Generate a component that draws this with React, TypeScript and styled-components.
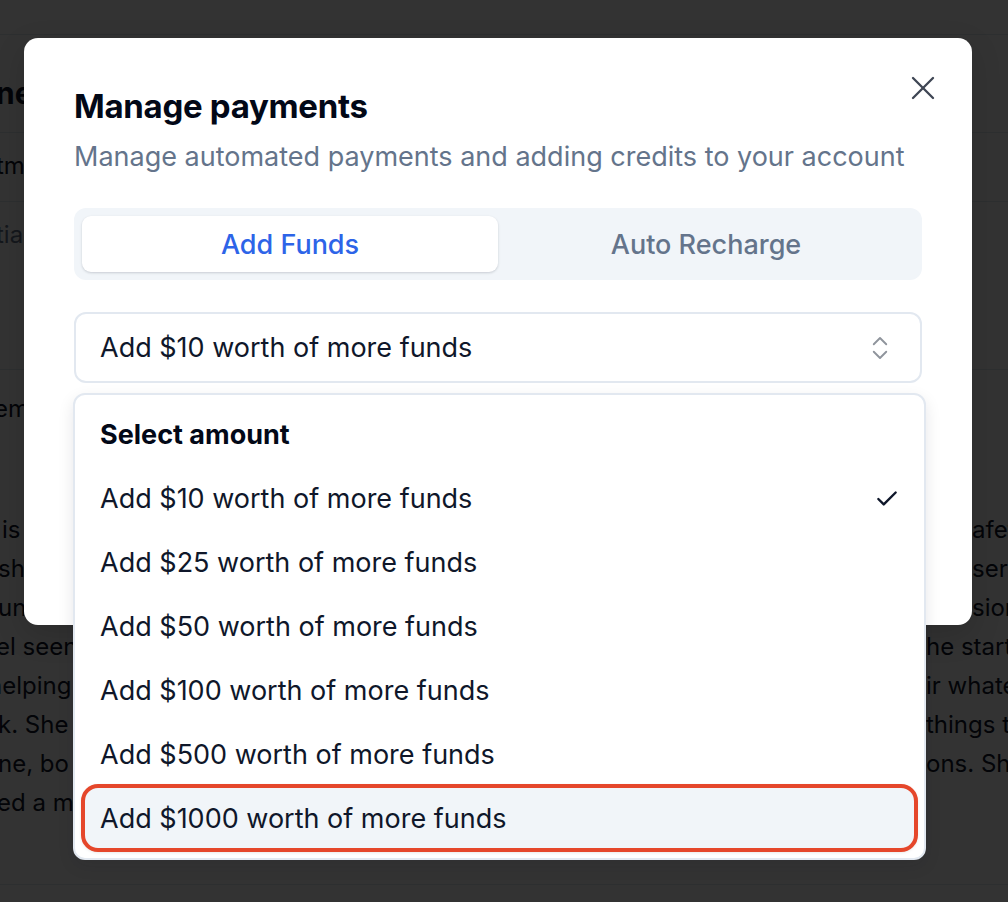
import React from "react";
import styled, { createGlobalStyle } from "styled-components";

const GlobalStyle = createGlobalStyle`
  html, body {
    margin: 0;
    padding: 0;
    width: 1008px;
    height: 902px;
    overflow: hidden;
    background: #ffffff;
    font-family: Inter, "Noto Sans", "Liberation Sans", sans-serif;
    color: #0f172a;
  }
  * { box-sizing: border-box; }
`;

/* ---------- background page ---------- */
const Page = styled.div`
  position: relative;
  width: 1008px;
  height: 902px;
  overflow: hidden;
  display: flex;
  flex-direction: column;
  background: #ffffff;
`;

const TopBar = styled.div`
  height: 35px;
  border-bottom: 1px solid #e2e8f0;
`;

const Section = styled.div<{ $h: number; $muted?: boolean; $bold?: boolean; $size?: number }>`
  height: ${(p) => p.$h}px;
  border-bottom: 1px solid #e2e8f0;
  padding-top: ${(p) => (p.$bold ? 42 : 17)}px;
  font-size: ${(p) => p.$size ?? 24}px;
  font-weight: ${(p) => (p.$bold ? 700 : 400)};
  color: ${(p) => (p.$muted ? "#64748b" : "#0f172a")};
  line-height: 32px;
  white-space: nowrap;
  margin-left: -4px;
`;

const Intro = styled.div`
  font-size: 24px;
  line-height: 32px;
  padding-top: 23px;
  height: 140px;
  white-space: nowrap;
  margin-left: -6px;
`;

const Paragraph = styled.div`
  display: flex;
  flex-direction: column;
  font-size: 24px;
  line-height: 39px;
  height: 375px;
  border-bottom: 1px solid #e2e8f0;
`;

const Line = styled.div<{ $split: number }>`
  display: grid;
  grid-template-columns: ${(p) => p.$split}px 1fr;
  white-space: nowrap;
`;

const LeftFrag = styled.span<{ $shift: number }>`
  overflow: hidden;
  margin-left: ${(p) => p.$shift}px;
`;

const RightFrag = styled.span`
  overflow: hidden;
`;

const Overlay = styled.div`
  position: absolute;
  inset: 0;
  background: rgba(0, 0, 0, 0.8);
`;

/* ---------- dialog ---------- */
const Dialog = styled.div`
  position: absolute;
  left: 24px;
  top: 38px;
  width: 948px;
  height: 587px;
  background: #ffffff;
  border-radius: 14px;
  padding: 48px 50px 0 50px;
  display: flex;
  flex-direction: column;
  box-shadow: 0 10px 30px rgba(0, 0, 0, 0.15);
`;

const CloseButton = styled.button`
  position: absolute;
  top: 30px;
  right: 29px;
  width: 40px;
  height: 40px;
  padding: 0;
  border: none;
  background: transparent;
  color: #3f4654;
  display: flex;
  align-items: center;
  justify-content: center;
`;

const Title = styled.h2`
  margin: 0;
  font-size: 33px;
  line-height: 40px;
  font-weight: 700;
  letter-spacing: -0.3px;
  color: #020817;
`;

const Subtitle = styled.p`
  margin: 13px 0 0 0;
  font-size: 27px;
  line-height: 36px;
  color: #64748b;
`;

const TabList = styled.div`
  margin-top: 33px;
  height: 72px;
  background: #f1f5f9;
  border-radius: 12px;
  padding: 8px;
  display: grid;
  grid-template-columns: 1fr 1fr;
`;

const Tab = styled.div<{ $active?: boolean }>`
  display: flex;
  align-items: center;
  justify-content: center;
  border-radius: 9px;
  font-size: 27px;
  font-weight: 500;
  color: ${(p) => (p.$active ? "#2d64e8" : "#64748b")};
  background: ${(p) => (p.$active ? "#ffffff" : "transparent")};
  box-shadow: ${(p) =>
    p.$active ? "0 1px 3px rgba(15,23,42,0.12), 0 1px 2px rgba(15,23,42,0.06)" : "none"};
`;

const Trigger = styled.div`
  margin-top: 32px;
  height: 71px;
  border: 2px solid #e2e8f0;
  border-radius: 12px;
  padding: 0 25px 0 24px;
  display: flex;
  align-items: center;
  justify-content: space-between;
  font-size: 27px;
  color: #0f172a;
`;

const ChevronWrap = styled.span`
  display: flex;
  color: #8f949c;
`;

const Menu = styled.div`
  position: absolute;
  left: 73px;
  top: 393px;
  width: 853px;
  height: 467px;
  background: #ffffff;
  border: 2px solid #e2e8f0;
  border-radius: 12px;
  padding: 8px 8px;
  display: flex;
  flex-direction: column;
  box-shadow: 0 6px 16px rgba(15, 23, 42, 0.1);
`;

const MenuLabel = styled.div`
  height: 64px;
  padding-left: 17px;
  display: flex;
  align-items: center;
  font-size: 27px;
  font-weight: 700;
  color: #020817;
`;

const MenuItem = styled.div<{ $highlight?: boolean }>`
  height: 64px;
  padding: 0 16px 0 17px;
  display: flex;
  align-items: center;
  justify-content: space-between;
  font-size: 27px;
  color: #0f172a;
  border-radius: 15px;
  background: ${(p) => (p.$highlight ? "#f1f5f9" : "transparent")};
  ${(p) =>
    p.$highlight
      ? `outline: 4px solid #e5472b; outline-offset: -2px; box-shadow: 0 1px 4px rgba(0,0,0,0.22);`
      : ""}
`;

const CheckWrap = styled.span`
  display: flex;
  color: #0f172a;
`;

const XIcon = () => (
  <svg width="40" height="40" viewBox="0 0 24 24" fill="none" stroke="currentColor" strokeWidth="1.4" strokeLinecap="round" strokeLinejoin="round">
    <path d="M18 6 6 18" />
    <path d="m6 6 12 12" />
  </svg>
);

const ChevronsUpDown = () => (
  <svg width="30" height="30" viewBox="0 0 24 24" fill="none" stroke="currentColor" strokeWidth="1.5" strokeLinecap="round" strokeLinejoin="round">
    <path d="m7 15 5 5 5-5" />
    <path d="m7 9 5-5 5 5" />
  </svg>
);

const Check = () => (
  <svg width="26" height="26" viewBox="0 0 24 24" fill="none" stroke="currentColor" strokeWidth="2.2" strokeLinecap="round" strokeLinejoin="round">
    <path d="M20 6 9 17l-5-5" />
  </svg>
);

const lines: { left: string; shift: number; split: number; right: string }[] = [
  { left: "is", shift: 2, split: 972, right: "afety and comfort" },
  { left: "sh", shift: -2, split: 972, right: " serving" },
  { left: "unc", shift: -2, split: 972, right: "sion of the" },
  { left: "el seen", shift: -4, split: 926, right: "he starting" },
  { left: "helping", shift: -12, split: 926, right: "ir whatever" },
  { left: "k. She", shift: -2, split: 926, right: "things to" },
  { left: "ne, bo", shift: -2, split: 926, right: "ons. She" },
  { left: "ed a m", shift: -3, split: 926, right: "" },
];

const amounts = [10, 25, 50, 100, 500, 1000];

export default function App() {
  return (
    <>
      <GlobalStyle />
      <Page>
        <TopBar />
        <Section $h={98} $bold $size={30}>ne</Section>
        <Section $h={69}>tment</Section>
        <Section $h={168} $muted>tial</Section>
        <Intro>em</Intro>
        <Paragraph>
          {lines.map((l, i) => (
            <Line key={i} $split={l.split}>
              <LeftFrag $shift={l.shift}>{l.left}</LeftFrag>
              <RightFrag>{l.right}</RightFrag>
            </Line>
          ))}
        </Paragraph>
        <Overlay />
        <Dialog>
          <Title>Manage payments</Title>
          <Subtitle>Manage automated payments and adding credits to your account</Subtitle>
          <TabList>
            <Tab $active>Add Funds</Tab>
            <Tab>Auto Recharge</Tab>
          </TabList>
          <Trigger>
            <span>Add $10 worth of more funds</span>
            <ChevronWrap>
              <ChevronsUpDown />
            </ChevronWrap>
          </Trigger>
          <CloseButton aria-label="Close">
            <XIcon />
          </CloseButton>
        </Dialog>
        <Menu>
          <MenuLabel>Select amount</MenuLabel>
          {amounts.map((a) => (
            <MenuItem key={a} $highlight={a === 1000}>
              <span>Add ${a} worth of more funds</span>
              {a === 10 && (
                <CheckWrap>
                  <Check />
                </CheckWrap>
              )}
            </MenuItem>
          ))}
        </Menu>
      </Page>
    </>
  );
}
